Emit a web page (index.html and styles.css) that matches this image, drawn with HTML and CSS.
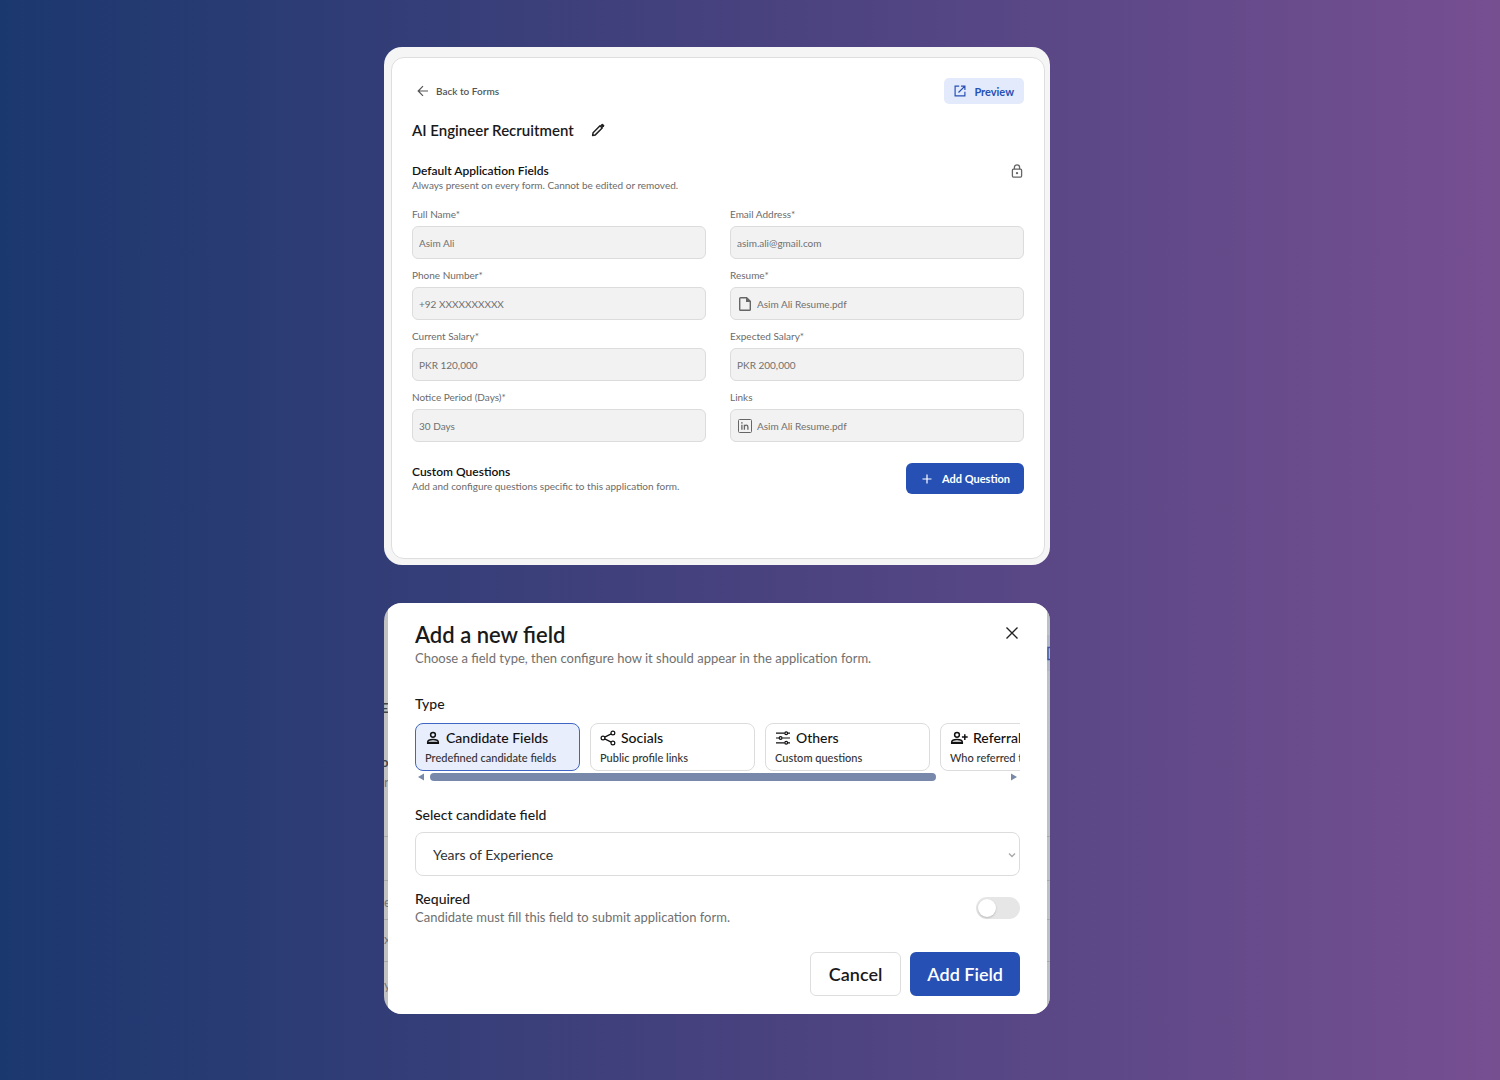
FILE: index.html
```html
<!DOCTYPE html>
<html lang="en">
<head>
    <meta charset="UTF-8">
    <meta name="viewport" content="width=device-width, initial-scale=1.0">
    <title>Form Builder</title>
    <link rel="stylesheet" href="styles.css">
</head>
<body>
    <main class="page">

        <!-- form editor -->
        <section class="card editor">
            <div class="panel">
                <div class="topbar">
                    <a class="back" href="#">
                        <svg width="12" height="12" viewBox="0 0 12 12" fill="none" stroke="currentColor" stroke-width="1.2"><path d="M11 6H1.5M6 1.2L1.2 6L6 10.8"/></svg>
                        Back to Forms
                    </a>
                    <button class="preview" type="button">
                        <svg width="12" height="12" viewBox="0 0 12 12" fill="none" stroke="currentColor" stroke-width="1.2"><path d="M5.2 1.1H1.1V10.9H10.9V6.8M7 1.1H10.9V5M10.9 1.1L4.5 7.5"/></svg>
                        Preview
                    </button>
                </div>

                <div class="title-row">
                    <h1>AI Engineer Recruitment</h1>
                    <button class="icon-btn" type="button" aria-label="Edit title">
                        <svg width="14" height="14" viewBox="0 0 14 14"><path d="M1.6 12.4L2.1 9.7L9 2.8L11.2 5L4.3 11.9Z" fill="none" stroke="currentColor" stroke-width="1.5" stroke-linejoin="round"/><path d="M9.2 2.4L10.7 0.9Q11.3 0.4 11.9 0.9L13.1 2.1Q13.6 2.7 13.1 3.3L11.6 4.8Z" fill="currentColor"/></svg>
                    </button>
                </div>

                <div class="section-head">
                    <div>
                        <h2>Default Application Fields</h2>
                        <p class="hint">Always present on every form. Cannot be edited or removed.</p>
                    </div>
                    <svg class="lock" width="14" height="14" viewBox="0 0 14 14" fill="none" stroke="currentColor" stroke-width="1.3"><rect x="2.4" y="5.2" width="9.2" height="7.9" rx="1"/><path d="M4.4 5.2V3.4A2.6 2.6 0 0 1 9.6 3.4V5.2"/><circle cx="7" cy="9.1" r="1.2" fill="currentColor" stroke="none"/></svg>
                </div>

                <div class="fields">
                    <div class="field">
                        <label for="name">Full Name*</label>
                        <div class="box"><input id="name" type="text" value="Asim Ali" disabled></div>
                    </div>
                    <div class="field">
                        <label for="email">Email Address*</label>
                        <div class="box"><input id="email" type="email" value="asim.ali@gmail.com" disabled></div>
                    </div>
                    <div class="field">
                        <label for="phone">Phone Number*</label>
                        <div class="box"><input id="phone" type="tel" value="+92 XXXXXXXXXX" disabled></div>
                    </div>
                    <div class="field">
                        <label for="resume">Resume*</label>
                        <div class="box">
                            <svg width="16" height="16" viewBox="0 0 16 16"><path d="M3.6 1.7H9.6L13.3 5.4V13.4Q13.3 14.3 12.4 14.3H3.6Q2.7 14.3 2.7 13.4V2.6Q2.7 1.7 3.6 1.7Z" fill="none" stroke="currentColor" stroke-width="1.4"/><path d="M9 1.5V6H13.6Z" fill="currentColor"/></svg>
                            <input id="resume" type="text" value="Asim Ali Resume.pdf" disabled>
                        </div>
                    </div>
                    <div class="field">
                        <label for="current">Current Salary*</label>
                        <div class="box"><input id="current" type="text" value="PKR 120,000" disabled></div>
                    </div>
                    <div class="field">
                        <label for="expected">Expected Salary*</label>
                        <div class="box"><input id="expected" type="text" value="PKR 200,000" disabled></div>
                    </div>
                    <div class="field">
                        <label for="notice">Notice Period (Days)*</label>
                        <div class="box"><input id="notice" type="text" value="30 Days" disabled></div>
                    </div>
                    <div class="field">
                        <label for="links">Links</label>
                        <div class="box">
                            <svg width="16" height="16" viewBox="0 0 16 16" fill="none" stroke="currentColor"><rect x="1.5" y="1.5" width="13" height="13" rx="1"/><path d="M4.9 6.8V11.8M7.4 6.8V11.8M7.4 9V8.6Q7.6 7.2 9.2 7.2Q10.9 7.2 10.9 9V11.8" stroke-width="1.3"/><circle cx="4.9" cy="4.9" r="0.8" fill="currentColor" stroke="none"/></svg>
                            <input id="links" type="text" value="Asim Ali Resume.pdf" disabled>
                        </div>
                    </div>
                </div>

                <div class="section-head custom">
                    <div>
                        <h2>Custom Questions</h2>
                        <p class="hint">Add and configure questions specific to this application form.</p>
                    </div>
                    <button class="add-question" type="button">
                        <svg width="10" height="10" viewBox="0 0 10 10" fill="none" stroke="currentColor" stroke-width="1.2"><path d="M5 0.5V9.5M0.5 5H9.5"/></svg>
                        Add Question
                    </button>
                </div>
            </div>
        </section>

        <!-- add field dialog, the dimmed page shows at its edges -->
        <section class="card backdrop">
            <div class="edge left" aria-hidden="true">
                <b class="t1">E</b>
                <b class="t2">o</b>
                <span class="t3">r</span>
                <span class="t4">e</span>
                <span class="t5">x</span>
                <span class="t6">y</span>
                <i class="l1"></i><i class="l2"></i><i class="l3"></i><i class="l4"></i>
            </div>
            <div class="edge right" aria-hidden="true">
                <svg width="3" height="36" viewBox="0 0 3 36"><rect width="3" height="36" fill="#b0b8c8"/><path d="M3 12.5H1V24.5H3" fill="none" stroke="#3a55a5" stroke-width="1.4"/></svg>
                <i class="l1"></i><i class="l2"></i><i class="l3"></i><i class="l4"></i>
            </div>

            <form class="modal">
                <div class="modal-head">
                    <div>
                        <h2>Add a new field</h2>
                        <p>Choose a field type, then configure how it should appear in the application form.</p>
                    </div>
                    <button class="icon-btn" type="button" aria-label="Close">
                        <svg width="16" height="16" viewBox="0 0 16 16" fill="none" stroke="currentColor" stroke-width="1.4"><path d="M2.5 2.5L13.5 13.5M13.5 2.5L2.5 13.5"/></svg>
                    </button>
                </div>

                <p class="label">Type</p>
                <div class="types">
                    <button class="type active" type="button">
                        <span class="type-name">
                            <svg width="16" height="16" viewBox="0 0 16 16" fill="none" stroke="currentColor" stroke-width="1.5"><circle cx="8" cy="4.8" r="2.4"/><path d="M2.7 13.3V12Q2.9 9.6 8 9.6Q13.1 9.6 13.3 12V13.3Z"/><path d="M3 12.6H13"/></svg>
                            Candidate Fields
                        </span>
                        <span class="type-text">Predefined candidate fields</span>
                    </button>
                    <button class="type" type="button">
                        <span class="type-name">
                            <svg width="16" height="16" viewBox="0 0 16 16" fill="none" stroke="currentColor" stroke-width="1.2"><circle cx="3" cy="8" r="1.9"/><circle cx="12.9" cy="3" r="1.9"/><circle cx="12.9" cy="13" r="1.9"/><path d="M4.7 7.1L11.2 3.9M4.7 8.9L11.2 12.1"/></svg>
                            Socials
                        </span>
                        <span class="type-text">Public profile links</span>
                    </button>
                    <button class="type" type="button">
                        <span class="type-name">
                            <svg width="16" height="16" viewBox="0 0 16 16" fill="none" stroke="currentColor" stroke-width="1.2"><path d="M1 3.2H9.6M12.8 3.2H15M1 8H4M7.2 8H15M1 12.8H9.6M12.8 12.8H15"/><circle cx="11.2" cy="3.2" r="1.4"/><circle cx="5.6" cy="8" r="1.4"/><circle cx="11.2" cy="12.8" r="1.4"/></svg>
                            Others
                        </span>
                        <span class="type-text">Custom questions</span>
                    </button>
                    <button class="type" type="button">
                        <span class="type-name">
                            <svg width="18" height="16" viewBox="0 0 18 16" fill="none" stroke="currentColor" stroke-width="1.5"><circle cx="7" cy="4.8" r="2.4"/><path d="M1.7 13.3V12Q1.9 9.6 7 9.6Q12.1 9.6 12.3 12V13.3Z"/><path d="M2 12.6H12M14.8 4.2V10M11.9 7.1H17.7"/></svg>
                            Referral
                        </span>
                        <span class="type-text">Who referred them</span>
                    </button>
                </div>
                <div class="scrollbar" aria-hidden="true">
                    <svg width="6" height="8" viewBox="0 0 6 8" fill="currentColor"><path d="M6 0.5V7.5L0 4Z"/></svg>
                    <div class="track"><div class="thumb"></div></div>
                    <svg width="6" height="8" viewBox="0 0 6 8" fill="currentColor"><path d="M0 0.5V7.5L6 4Z"/></svg>
                </div>

                <label class="label" for="candidate-field">Select candidate field</label>
                <div class="select">
                    <select id="candidate-field">
                        <option>Years of Experience</option>
                    </select>
                    <svg width="8" height="6" viewBox="0 0 8 6" fill="none" stroke="currentColor" stroke-width="1.4"><path d="M1 1.5L4 4.5L7 1.5"/></svg>
                </div>

                <div class="required">
                    <div>
                        <label for="required">Required</label>
                        <p>Candidate must fill this field to submit application form.</p>
                    </div>
                    <input class="toggle" id="required" type="checkbox">
                </div>

                <div class="actions">
                    <button class="cancel" type="button">Cancel</button>
                    <button class="submit" type="button">Add Field</button>
                </div>
            </form>
        </section>

    </main>
</body>
</html>
```
FILE: styles.css
```css
*{
    margin: 0;
    padding: 0;
    box-sizing: border-box;
}

body{
    min-height: 100vh;
    font-family: Lato, "Open Sans", sans-serif;
    color: #1a1a1a;
    background: linear-gradient(90deg, #1b386e, #48427f 50%, #764f91);
}

button, input, select{
    font-family: inherit;
    color: inherit;
}

button{
    border: none;
    background: none;
    cursor: pointer;
}

svg{
    display: block;
    flex-shrink: 0;
}

.page{
    display: flex;
    flex-direction: column;
    gap: 38px;
    padding: 47px 30% 66px 25.6%;
}

.card{
    overflow: hidden;
    border-radius: 18px;
}

/* form editor */
.editor{
    padding: 10px 5px 6px 7px;
    background: #f5f5f5;
}

.panel{
    padding: 20px 20px 64px;
    border: 1px solid #dedede;
    border-radius: 13px;
    background: #fff;
}

.topbar,
.title-row,
.section-head,
.modal-head,
.required{
    display: flex;
    align-items: center;
    justify-content: space-between;
}

.back{
    display: flex;
    align-items: center;
    gap: 7px;
    padding-left: 5px;
    font-size: 10px;
    font-weight: 600;
    color: #555;
    text-decoration: none;
}

.preview{
    display: flex;
    align-items: center;
    gap: 8px;
    height: 26px;
    padding: 0 10px;
    border-radius: 5px;
    background: #e3eafb;
    font-size: 11px;
    font-weight: 700;
    color: #2750b5;
}

.title-row{
    justify-content: flex-start;
    gap: 17px;
    margin-top: 16px;
}

.title-row h1{
    font-size: 15px;
    line-height: 20px;
    font-weight: 600;
}

.section-head{
    align-items: flex-start;
    margin-top: 24px;
}

.section-head h2{
    font-size: 12px;
    line-height: 14px;
    font-weight: 600;
    color: #111;
}

.hint{
    font-size: 10px;
    line-height: 14px;
    color: #6b6b6b;
}

.lock{
    color: #666;
}

.fields{
    display: grid;
    grid-template-columns: 1fr 1fr;
    gap: 9px 24px;
    margin-top: 15px;
}

.field label{
    display: block;
    margin-bottom: 5px;
    font-size: 10px;
    line-height: 14px;
    color: #6b6b6b;
}

.box{
    display: flex;
    align-items: center;
    gap: 4px;
    height: 33px;
    padding: 0 6px;
    border: 1px solid #dcdcdc;
    border-radius: 6px;
    background: #f2f2f2;
    color: #666;
}

.box input{
    width: 100%;
    border: none;
    background: none;
    font-size: 10px;
    color: #707070;
}

.custom{
    align-items: center;
    margin-top: 21px;
}

.add-question{
    display: flex;
    align-items: center;
    gap: 10px;
    height: 31px;
    padding: 0 14px 0 16px;
    border-radius: 6px;
    background: #2750b5;
    font-size: 11px;
    font-weight: 700;
    color: #fff;
}

/* add field dialog */
.backdrop{
    position: relative;
    padding: 0 3px 0 4px;
    background: #c2c2c2;
}

.modal{
    position: relative;
    padding: 18px 27px;
    background: #fff;
}

.edge{
    position: absolute;
    top: 0;
    bottom: 0;
    overflow: hidden;
    font-size: 13px;
    line-height: 16px;
    color: #777;
}

.left{
    left: 0;
    width: 4px;
}

.right{
    right: 0;
    width: 3px;
    background: #bcc1c5;
}

.edge b, .edge span, .edge i, .edge svg{
    position: absolute;
    left: 0;
}

.edge b{
    left: -3px;
    color: #444;
}

.edge i{
    width: 4px;
    height: 1px;
    background: #a9a9a9;
}

.edge svg{ top: 32px; }
.t1{ top: 97px; }
.t2{ top: 151px; }
.t3{ top: 171px; }
.t4{ top: 291px; }
.t5{ top: 328px; }
.t6{ top: 374px; }
.l1{ top: 233px; }
.l2{ top: 277px; }
.l3{ top: 316px; }
.l4{ top: 358px; }

.modal-head{
    align-items: flex-start;
}

.modal-head h2{
    font-size: 22px;
    line-height: 28px;
    font-weight: 600;
}

.modal-head p,
.required p{
    font-size: 13px;
    line-height: 18px;
    color: #707070;
}

.icon-btn{
    color: #222;
}

.modal-head .icon-btn{
    padding: 4px 0;
}

.label{
    display: block;
    margin-top: 27px;
    font-size: 14px;
    line-height: 20px;
    font-weight: 500;
}

.types{
    display: flex;
    gap: 10px;
    margin-top: 9px;
    overflow: hidden;
}

.type{
    flex: 0 0 165px;
    height: 48px;
    padding: 2px 9px 0;
    border: 1px solid #dcdcdc;
    border-radius: 8px;
    text-align: left;
}

.type.active{
    border-color: #3f66c4;
    background: #e8eefb;
}

.type-name{
    display: flex;
    align-items: center;
    gap: 5px;
    font-size: 14px;
    line-height: 20px;
    font-weight: 500;
    color: #111;
}

.type-text{
    display: block;
    font-size: 11px;
    line-height: 20px;
    font-weight: 500;
    color: #333;
    white-space: nowrap;
}

.scrollbar{
    display: flex;
    align-items: center;
    gap: 6px;
    margin-top: 2px;
    padding: 0 3px;
    color: #7788ab;
}

.track{
    flex: 1;
}

.thumb{
    width: 88%;
    height: 8px;
    border-radius: 4px;
    background: #7788ab;
}

.scrollbar + .label{
    margin-top: 24px;
}

.select{
    position: relative;
    margin-top: 7px;
}

.select select{
    appearance: none;
    display: block;
    width: 100%;
    height: 44px;
    padding: 0 17px;
    border: 1px solid #dcdcdc;
    border-radius: 8px;
    background: #fff;
    font-size: 14px;
    color: #333;
}

.select svg{
    position: absolute;
    top: 20px;
    right: 4px;
    color: #aaa;
}

.required{
    margin-top: 14px;
}

.required label{
    display: block;
    font-size: 14px;
    line-height: 18px;
    font-weight: 500;
}

.toggle{
    appearance: none;
    width: 44px;
    height: 22px;
    padding: 2px;
    border-radius: 11px;
    background: #e6e6e6;
    cursor: pointer;
}

.toggle::before{
    content: "";
    display: block;
    width: 18px;
    height: 18px;
    border-radius: 50%;
    background: #fff;
    box-shadow: 0 1px 2px rgba(0, 0, 0, 0.2);
}

.toggle:checked{
    background: #2750b5;
}

.toggle:checked::before{
    margin-left: auto;
}

.actions{
    display: flex;
    justify-content: flex-end;
    gap: 9px;
    margin-top: 26px;
}

.actions button{
    height: 44px;
    padding: 0 17px;
    border-radius: 6px;
    font-size: 18px;
    font-weight: 600;
}

.actions .cancel{
    padding: 0 18px;
    border: 1px solid #dedede;
}

.actions .submit{
    background: #2750b5;
    color: #fff;
}
```
